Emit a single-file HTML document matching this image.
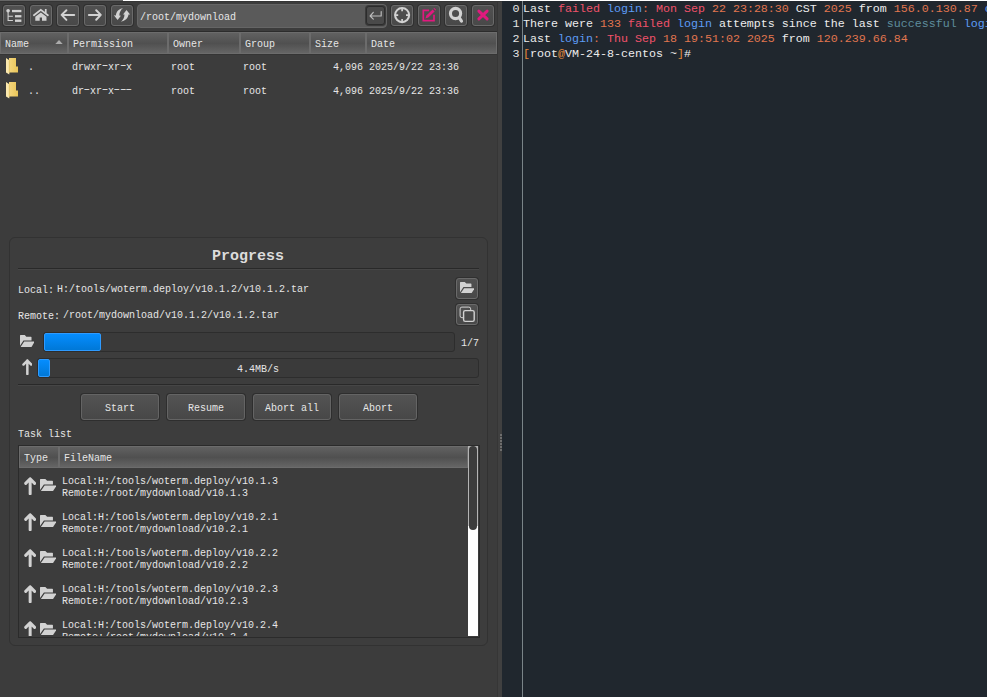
<!DOCTYPE html>
<html>
<head>
<meta charset="utf-8">
<title>woterm sftp</title>
<style>
html,body{margin:0;padding:0;}
body{width:987px;height:697px;overflow:hidden;background:#3c3c3c;position:relative;font-family:"Liberation Mono",monospace;}
.abs{position:absolute;}
.s{position:absolute;white-space:pre;font:11px/12px "Liberation Mono",monospace;color:#e6e6e6;transform:scaleX(.9091);transform-origin:0 0;}
.s.c{transform-origin:50% 0;text-align:center;}
.hy{display:inline-block;transform:translateY(-2.5px) scaleX(1.75);}
#topg{left:0;top:0;width:123px;height:1px;background:#666;}
#topw{left:123px;top:0;width:864px;height:1px;background:#fff;}
#topd{left:0;top:1px;width:502px;height:1px;background:#353535;}
.tb{position:absolute;top:5px;width:20px;height:19px;border:1px solid #6a6a6a;border-radius:3px;background:linear-gradient(#515151,#484848);box-shadow:0 0 0 1px #303030;}
.tb svg{position:absolute;left:-1px;top:-1px;}
#path{left:137px;top:4px;width:248px;height:22px;border:1px solid #656565;border-radius:4px;background:#5a5a5a;}
#enter{left:365.5px;top:6.3px;width:17px;height:17px;border:1px solid #2c2c2c;border-radius:3px;background:#4a4a4a;box-shadow:0 0 0 1px #3a3a3a;}
.hd{position:absolute;box-sizing:border-box;border:1px solid #6c6c6c;background:linear-gradient(#616161 0%,#505050 52%,#656565 100%);}
#gb{left:9px;top:237px;width:477px;height:407px;border:1px solid #323232;border-radius:6px;background:#3d3d3d;}
.sep{position:absolute;left:18px;width:461px;height:1px;background:#292929;}
.pb{position:absolute;box-sizing:border-box;border:1px solid #2d2d2d;border-radius:3px;background:#3a3a3a;}
.chunk{position:absolute;left:0;top:0;bottom:0;box-sizing:border-box;border:1px solid #2f9bff;border-radius:2px;background:linear-gradient(#058dff,#0078d7);}
.btn{position:absolute;top:394px;width:78px;height:26px;box-sizing:border-box;border:1px solid #646464;border-radius:3px;background:linear-gradient(#535353,#474747);box-shadow:0 0 0 1px #2e2e2e;}
.ib{position:absolute;left:456px;width:20px;height:19px;border:1px solid #6a6a6a;border-radius:3px;background:linear-gradient(#515151,#484848);box-shadow:0 0 0 1px #303030;}
#term{left:502px;top:1px;width:485px;height:696px;background:#20272e;}
.tl{position:absolute;white-space:pre;font:11.667px/15px "Liberation Mono",monospace;color:#ececec;}
.w{color:#ececec}.rd{color:#f0526a}.bl{color:#5c9cf5}.or{color:#e0764e}.tq{color:#5e8d9c}.ye{color:#e58a3c}
</style>
</head>
<body>
<div class="abs" style="left:497px;top:1px;width:5px;height:696px;background:#404040;border-left:1px solid #363636;box-sizing:border-box"></div>
<div class="abs" id="topd"></div>
<div class="abs" id="topg"></div>
<div class="abs" id="topw"></div>
<div id="toolbar">
<div class="tb" style="left:3px"><svg width="22" height="21" viewBox="0 0 22 21"><g fill="#d2d2d2" stroke="none"><circle cx="5.1" cy="5.8" r="1.8"/><rect x="9" y="4.9" width="9.4" height="2.3"/><rect x="12" y="10.1" width="6.4" height="2.3"/><rect x="12" y="14.5" width="6.4" height="2.4"/></g><path d="M5.1 7 V15.5 H9.9 M5.1 11.2 H9.9" fill="none" stroke="#d2d2d2" stroke-width="1.1"/></svg></div>
<div class="tb" style="left:30px"><svg width="22" height="21" viewBox="0 0 22 21"><path d="M3.9 10.3 L10.8 4.9 L17.9 10.3" fill="none" stroke="#d2d2d2" stroke-width="1.8" stroke-linecap="round" stroke-linejoin="miter"/><rect x="14.9" y="4" width="1.7" height="4" fill="#d2d2d2"/><path d="M10.9 7.4 L16.5 11.8 V15.8 H12 V12.4 H9.7 V15.8 H5.3 V11.8 Z" fill="#d2d2d2"/></svg></div>
<div class="tb" style="left:57px"><svg width="22" height="21" viewBox="0 0 22 21"><path d="M17.2 9.9 H4.8 M9.4 5.2 L4.6 9.9 L9.4 14.9" fill="none" stroke="#d2d2d2" stroke-width="2" stroke-linecap="round" stroke-linejoin="round"/></svg></div>
<div class="tb" style="left:84px"><svg width="22" height="21" viewBox="0 0 22 21"><path d="M4.9 9.9 H16.6 M12.2 5.2 L16.8 9.9 L12.2 14.8" fill="none" stroke="#d2d2d2" stroke-width="2" stroke-linecap="round" stroke-linejoin="round"/></svg></div>
<div class="tb" style="left:111px"><svg width="22" height="21" viewBox="0 0 22 21"><path d="M12 3 C8 3.8 5.2 6.5 4.9 10.4 L2.85 10.3 L6.6 15 L9.9 10.7 L8.3 10.5 C8.4 7.5 9.6 5 12 3 Z" fill="#d2d2d2"/><path d="M15.5 4.9 L19.1 9.6 L17.5 9.6 C17.2 13.3 14 16.2 9.9 16.7 C12.4 15 13.3 12.5 13.5 9.5 L12 9.4 Z" fill="#d2d2d2"/></svg></div>
<div class="abs" id="path"></div>
<div class="s" style="left:140px;top:11px">/root/mydownload</div>
<div class="abs" id="enter"><svg class="abs" style="left:-1px;top:-1px" width="19" height="19" viewBox="0 0 19 19"><path d="M15.2 5.6 V10 H4.4 M7.3 6.3 L4.1 10 L7.3 13.2" fill="none" stroke="#bdbdbd" stroke-width="1.15" stroke-linecap="round" stroke-linejoin="round"/></svg></div>
<div class="tb" style="left:391px"><svg width="22" height="21" viewBox="0 0 22 21"><circle cx="11.1" cy="10.1" r="7.05" fill="none" stroke="#d2d2d2" stroke-width="2.05"/><path d="M11.1 3 V6.2 M11.1 14 V17.2 M4 10.1 H7.2 M15 10.1 H18.2" stroke="#d2d2d2" stroke-width="1.7" fill="none"/></svg></div>
<div class="tb" style="left:418px"><svg width="22" height="21" viewBox="0 0 22 21"><path d="M11 5.3 H5.3 V15.7 H16 V9.8" fill="none" stroke="#e0197e" stroke-width="1.7"/><path d="M7.4 13.4 L8.4 10.6 L14.6 4.4 L16.6 6.4 L10.3 12.6 Z" fill="#e0197e"/><path d="M15.4 3.6 L16.2 2.9 L18.1 4.8 L17.4 5.6 Z" fill="#e0197e"/></svg></div>
<div class="tb" style="left:445px"><svg width="22" height="21" viewBox="0 0 22 21"><circle cx="10.55" cy="8.5" r="5.1" fill="none" stroke="#d2d2d2" stroke-width="3.1"/><path d="M14.2 12.6 L16.5 16.2" stroke="#d2d2d2" stroke-width="3.1" stroke-linecap="round"/></svg></div>
<div class="tb" style="left:472px"><svg width="22" height="21" viewBox="0 0 22 21"><path d="M6.9 6.1 L15.1 13.9 M15.1 6.1 L6.9 13.9" stroke="#e0197e" stroke-width="3" stroke-linecap="round"/></svg></div>
</div>
<div id="filelist">
<div class="abs" style="left:0;top:31px;width:497px;height:1px;background:#2c2c2c"></div><div class="abs" style="left:0;top:54px;width:497px;height:1px;background:#353535"></div>
<div class="hd" style="left:0px;top:32px;width:68px;height:22px"></div>
<div class="s" style="left:5px;top:38px">Name</div>
<div class="hd" style="left:68px;top:32px;width:100px;height:22px"></div>
<div class="s" style="left:73px;top:38px">Permission</div>
<div class="hd" style="left:168px;top:32px;width:72px;height:22px"></div>
<div class="s" style="left:173px;top:38px">Owner</div>
<div class="hd" style="left:240px;top:32px;width:70px;height:22px"></div>
<div class="s" style="left:245px;top:38px">Group</div>
<div class="hd" style="left:310px;top:32px;width:56px;height:22px"></div>
<div class="s" style="left:315px;top:38px">Size</div>
<div class="hd" style="left:366px;top:32px;width:131px;height:22px"></div>
<div class="s" style="left:371px;top:38px">Date</div>
<svg class="abs" style="left:54px;top:38px" width="10" height="8" viewBox="0 0 10 8"><path d="M1.3 6 L5 2 L8.7 6 Z" fill="#ababab"/></svg>
<svg class="abs" style="left:5px;top:57px" width="14" height="18" viewBox="0 0 14 18"><defs><linearGradient id="fg0" x1="0" x2="1" y1="0" y2="0"><stop offset="0" stop-color="#f7dc8c"/><stop offset="1" stop-color="#e9c558"/></linearGradient></defs><path d="M1 1 H11 V9.5 H13 V15.5 H4 V1 Z" fill="url(#fg0)"/><path d="M1 1 L4.3 3.2 V17.6 L1 15.4 Z" fill="#fbe9ae"/><path d="M4.3 3.2 V15.5" stroke="#d9b54a" stroke-width=".6"/></svg>
<div class="s" style="left:28px;top:61px">.</div>
<div class="s" style="left:72px;top:61px">drwxr<span class="hy">-</span>xr<span class="hy">-</span>x</div>
<div class="s" style="left:171px;top:61px">root</div>
<div class="s" style="left:243px;top:61px">root</div>
<div class="s" style="left:333px;top:61px">4,096</div>
<div class="s" style="left:369px;top:61px">2025/9/22 23:36</div>
<svg class="abs" style="left:5px;top:81px" width="14" height="18" viewBox="0 0 14 18"><defs><linearGradient id="fg1" x1="0" x2="1" y1="0" y2="0"><stop offset="0" stop-color="#f7dc8c"/><stop offset="1" stop-color="#e9c558"/></linearGradient></defs><path d="M1 1 H11 V9.5 H13 V15.5 H4 V1 Z" fill="url(#fg1)"/><path d="M1 1 L4.3 3.2 V17.6 L1 15.4 Z" fill="#fbe9ae"/><path d="M4.3 3.2 V15.5" stroke="#d9b54a" stroke-width=".6"/></svg>
<div class="s" style="left:28px;top:85px">..</div>
<div class="s" style="left:72px;top:85px">dr<span class="hy">-</span>xr<span class="hy">-</span>x<span class="hy">-</span><span class="hy">-</span><span class="hy">-</span></div>
<div class="s" style="left:171px;top:85px">root</div>
<div class="s" style="left:243px;top:85px">root</div>
<div class="s" style="left:333px;top:85px">4,096</div>
<div class="s" style="left:369px;top:85px">2025/9/22 23:36</div>
</div>
<div class="abs" id="gb"></div>
<div id="progress">
<div class="abs" style="left:168px;top:247px;width:160px;height:20px;text-align:center;font:bold 15px/20px 'Liberation Mono',monospace;color:#dcdcdc;white-space:pre">Progress</div>
<div class="sep" style="top:268px"></div><div class="sep" style="top:269px;background:#464646"></div>
<div class="s" style="left:18px;top:284px">Local:</div>
<div class="s" style="left:57px;top:283px">H:/tools/woterm.deploy/v10.1.2/v10.1.2.tar</div>
<div class="s" style="left:18px;top:310px">Remote:</div>
<div class="s" style="left:63px;top:309px">/root/mydownload/v10.1.2/v10.1.2.tar</div>
<div class="ib" style="top:278px"></div><svg class="abs" style="left:459.9px;top:281.9px" width="14.6" height="11.6" viewBox="0.2 0.2 14.8 12" preserveAspectRatio="none"><path d="M0.2 0.8 Q0.2 0.2 0.8 0.2 H5 L6.6 1.8 H11.2 Q11.8 1.8 11.8 2.4 V5.5 H3.7 L0.2 10.8 Z" fill="#d2d2d2"/><path d="M4.4 6.6 H15 L11.7 12.2 H0.7 Z" fill="#d2d2d2"/></svg>
<div class="ib" style="top:304px"><svg class="abs" style="left:-1px;top:-1px" width="22" height="21" viewBox="0 0 22 21"><rect x="4.1" y="3.1" width="10.6" height="10.6" rx="1.8" fill="none" stroke="#d2d2d2" stroke-width="1"/><rect x="7.6" y="6.6" width="10.6" height="10.8" rx="1.6" fill="#494949" stroke="#d2d2d2" stroke-width="1.4"/></svg></div>
<svg class="abs" style="left:19.8px;top:334.8px" width="14.7" height="12.2" viewBox="0.2 0.2 14.8 12" preserveAspectRatio="none"><path d="M0.2 0.8 Q0.2 0.2 0.8 0.2 H5 L6.6 1.8 H11.2 Q11.8 1.8 11.8 2.4 V5.5 H3.7 L0.2 10.8 Z" fill="#d2d2d2"/><path d="M4.4 6.6 H15 L11.7 12.2 H0.7 Z" fill="#d2d2d2"/></svg>
<div class="pb" style="left:43px;top:332px;width:412px;height:20px"><div class="chunk" style="width:57px"></div></div>
<div class="s" style="left:461px;top:337px">1/7</div>
<svg class="abs" style="left:21.6px;top:359.2px" width="10.7" height="16.2" viewBox="0 0 10.7 16.2"><path d="M5.35 1.55 V14.95 M1.45 5.55 L5.35 1.55 L9.25 5.55" fill="none" stroke="#d2d2d2" stroke-width="2.5" stroke-linecap="round" stroke-linejoin="round"/></svg>
<div class="pb" style="left:37px;top:358px;width:442px;height:20px"><div class="chunk" style="width:12px"></div></div>
<div class="s c" style="left:200px;top:363px;width:116px">4.4MB/s</div>
<div class="sep" style="top:384px"></div><div class="sep" style="top:385px;background:#464646"></div>
<div class="btn" style="left:81px"></div><div class="s c" style="left:81px;top:402px;width:78px">Start</div>
<div class="btn" style="left:167px"></div><div class="s c" style="left:167px;top:402px;width:78px">Resume</div>
<div class="btn" style="left:253px"></div><div class="s c" style="left:253px;top:402px;width:78px">Abort all</div>
<div class="btn" style="left:339px"></div><div class="s c" style="left:339px;top:402px;width:78px">Abort</div>
<div class="s" style="left:18px;top:428px">Task list</div>
<div class="abs" style="left:18px;top:445px;width:460px;height:191px;border:1px solid #2b2b2b;box-sizing:content-box;background:#3c3c3c"></div>
<div class="hd" style="left:19px;top:446px;width:40px;height:22px"></div><div class="hd" style="left:59px;top:446px;width:409px;height:22px"></div>
<div class="s" style="left:24px;top:452px">Type</div>
<div class="s" style="left:64px;top:452px">FileName</div>
<div class="abs" style="left:468px;top:446px;width:10px;height:190px;background:#fff"></div><div class="abs" style="left:468px;top:446px;width:10px;height:80px;background:#b4b4b4"></div><div class="abs" style="left:469px;top:446px;width:8px;height:84px;background:#3c3c3c;border-radius:4px"></div>
<div class="abs" style="left:19px;top:468px;width:449px;height:168px;overflow:hidden">
<svg class="abs" style="left:5.1px;top:9px" width="12.3" height="18.3" viewBox="0 0 12.3 18.3"><path d="M6.15 1.8 V16.8 M1.7 6.3500000000000005 L6.15 1.8 L10.600000000000001 6.3500000000000005" fill="none" stroke="#d2d2d2" stroke-width="3.0" stroke-linecap="round" stroke-linejoin="round"/></svg>
<svg class="abs" style="left:20.8px;top:10.9px" width="16.5" height="12.4" viewBox="0.2 0.2 14.8 12" preserveAspectRatio="none"><path d="M0.2 0.8 Q0.2 0.2 0.8 0.2 H5 L6.6 1.8 H11.2 Q11.8 1.8 11.8 2.4 V5.5 H3.7 L0.2 10.8 Z" fill="#d2d2d2"/><path d="M4.4 6.6 H15 L11.7 12.2 H0.7 Z" fill="#d2d2d2"/></svg>
<div class="s" style="left:43px;top:7px">Local:H:/tools/woterm.deploy/v10.1.3</div>
<div class="s" style="left:43px;top:19px">Remote:/root/mydownload/v10.1.3</div>
<svg class="abs" style="left:5.1px;top:45px" width="12.3" height="18.3" viewBox="0 0 12.3 18.3"><path d="M6.15 1.8 V16.8 M1.7 6.3500000000000005 L6.15 1.8 L10.600000000000001 6.3500000000000005" fill="none" stroke="#d2d2d2" stroke-width="3.0" stroke-linecap="round" stroke-linejoin="round"/></svg>
<svg class="abs" style="left:20.8px;top:46.9px" width="16.5" height="12.4" viewBox="0.2 0.2 14.8 12" preserveAspectRatio="none"><path d="M0.2 0.8 Q0.2 0.2 0.8 0.2 H5 L6.6 1.8 H11.2 Q11.8 1.8 11.8 2.4 V5.5 H3.7 L0.2 10.8 Z" fill="#d2d2d2"/><path d="M4.4 6.6 H15 L11.7 12.2 H0.7 Z" fill="#d2d2d2"/></svg>
<div class="s" style="left:43px;top:43px">Local:H:/tools/woterm.deploy/v10.2.1</div>
<div class="s" style="left:43px;top:55px">Remote:/root/mydownload/v10.2.1</div>
<svg class="abs" style="left:5.1px;top:81px" width="12.3" height="18.3" viewBox="0 0 12.3 18.3"><path d="M6.15 1.8 V16.8 M1.7 6.3500000000000005 L6.15 1.8 L10.600000000000001 6.3500000000000005" fill="none" stroke="#d2d2d2" stroke-width="3.0" stroke-linecap="round" stroke-linejoin="round"/></svg>
<svg class="abs" style="left:20.8px;top:82.9px" width="16.5" height="12.4" viewBox="0.2 0.2 14.8 12" preserveAspectRatio="none"><path d="M0.2 0.8 Q0.2 0.2 0.8 0.2 H5 L6.6 1.8 H11.2 Q11.8 1.8 11.8 2.4 V5.5 H3.7 L0.2 10.8 Z" fill="#d2d2d2"/><path d="M4.4 6.6 H15 L11.7 12.2 H0.7 Z" fill="#d2d2d2"/></svg>
<div class="s" style="left:43px;top:79px">Local:H:/tools/woterm.deploy/v10.2.2</div>
<div class="s" style="left:43px;top:91px">Remote:/root/mydownload/v10.2.2</div>
<svg class="abs" style="left:5.1px;top:117px" width="12.3" height="18.3" viewBox="0 0 12.3 18.3"><path d="M6.15 1.8 V16.8 M1.7 6.3500000000000005 L6.15 1.8 L10.600000000000001 6.3500000000000005" fill="none" stroke="#d2d2d2" stroke-width="3.0" stroke-linecap="round" stroke-linejoin="round"/></svg>
<svg class="abs" style="left:20.8px;top:118.9px" width="16.5" height="12.4" viewBox="0.2 0.2 14.8 12" preserveAspectRatio="none"><path d="M0.2 0.8 Q0.2 0.2 0.8 0.2 H5 L6.6 1.8 H11.2 Q11.8 1.8 11.8 2.4 V5.5 H3.7 L0.2 10.8 Z" fill="#d2d2d2"/><path d="M4.4 6.6 H15 L11.7 12.2 H0.7 Z" fill="#d2d2d2"/></svg>
<div class="s" style="left:43px;top:115px">Local:H:/tools/woterm.deploy/v10.2.3</div>
<div class="s" style="left:43px;top:127px">Remote:/root/mydownload/v10.2.3</div>
<svg class="abs" style="left:5.1px;top:153px" width="12.3" height="18.3" viewBox="0 0 12.3 18.3"><path d="M6.15 1.8 V16.8 M1.7 6.3500000000000005 L6.15 1.8 L10.600000000000001 6.3500000000000005" fill="none" stroke="#d2d2d2" stroke-width="3.0" stroke-linecap="round" stroke-linejoin="round"/></svg>
<svg class="abs" style="left:20.8px;top:154.9px" width="16.5" height="12.4" viewBox="0.2 0.2 14.8 12" preserveAspectRatio="none"><path d="M0.2 0.8 Q0.2 0.2 0.8 0.2 H5 L6.6 1.8 H11.2 Q11.8 1.8 11.8 2.4 V5.5 H3.7 L0.2 10.8 Z" fill="#d2d2d2"/><path d="M4.4 6.6 H15 L11.7 12.2 H0.7 Z" fill="#d2d2d2"/></svg>
<div class="s" style="left:43px;top:151px">Local:H:/tools/woterm.deploy/v10.2.4</div>
<div class="s" style="left:43px;top:163px">Remote:/root/mydownload/v10.2.4</div>
</div>
</div>
<div class="abs" id="term"></div>
<div id="termtext">
<div class="abs" style="left:522px;top:1px;width:1px;height:696px;background:#7a8488"></div>
<div class="tl" style="left:512.5px;top:2px;color:#e4e4e4">0</div><div class="tl" style="left:523px;top:2px;width:464px;overflow:hidden"><span class="w">Last </span><span class="rd">failed </span><span class="bl">login</span><span class="or">: </span><span class="rd">Mon Sep </span><span class="or">22 23:28:30 </span><span class="w">CST </span><span class="or">2025 </span><span class="w">from </span><span class="or">156.0.130.87 </span><span class="bl">on </span><span class="w">ssh</span><span class="or">:</span><span class="w">notty</span></div>
<div class="tl" style="left:512.5px;top:17px;color:#e4e4e4">1</div><div class="tl" style="left:523px;top:17px;width:464px;overflow:hidden"><span class="w">There were </span><span class="or">133 </span><span class="rd">failed </span><span class="bl">login </span><span class="w">attempts since the last </span><span class="tq">successful </span><span class="bl">login</span><span class="w">.</span></div>
<div class="tl" style="left:512.5px;top:32px;color:#e4e4e4">2</div><div class="tl" style="left:523px;top:32px;width:464px;overflow:hidden"><span class="w">Last </span><span class="bl">login</span><span class="or">: </span><span class="rd">Thu Sep </span><span class="or">18 19:51:02 2025 </span><span class="w">from </span><span class="or">120.239.66.84</span></div>
<div class="tl" style="left:512.5px;top:47px;color:#e4e4e4">3</div><div class="tl" style="left:523px;top:47px;width:464px;overflow:hidden"><span class="ye">[</span><span class="w">root</span><span class="ye">@</span><span class="w">VM-24-8-centos ~</span><span class="ye">]</span><span class="w">#</span></div>
<div class="abs" style="left:500px;top:434px;width:2px;height:2px;background:#6e6e6e"></div><div class="abs" style="left:500px;top:437px;width:2px;height:2px;background:#6e6e6e"></div><div class="abs" style="left:500px;top:440px;width:2px;height:2px;background:#6e6e6e"></div><div class="abs" style="left:500px;top:443px;width:2px;height:2px;background:#6e6e6e"></div><div class="abs" style="left:500px;top:446px;width:2px;height:2px;background:#6e6e6e"></div><div class="abs" style="left:500px;top:449px;width:2px;height:2px;background:#6e6e6e"></div>
</div>
</body>
</html>
